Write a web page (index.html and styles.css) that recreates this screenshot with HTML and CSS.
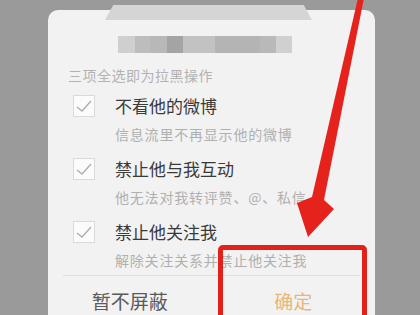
FILE: index.html
```html
<!DOCTYPE html>
<html lang="zh">
<head>
<meta charset="utf-8">
<link rel="stylesheet" href="styles.css">
</head>
<body>
<div class="screen">
  <div class="card">
    <div class="mosaic">
      <span class="m m1"></span><span class="m m2"></span><span class="m m3"></span><span class="m m4"></span><span class="m m5"></span><span class="m m6"></span><span class="m m7"></span><span class="m m8"></span>
    </div>
    <div class="hint">三项全选即为拉黑操作</div>
    <div class="items">
      <div class="item">
        <span class="check"><svg viewBox="0 0 22 22" width="22" height="22"><polyline points="4,12 9,16 18,6" fill="none" stroke="#adadad" stroke-width="1.3"/></svg></span>
        <div class="texts">
          <div class="title">不看他的微博</div>
          <div class="sub">信息流里不再显示他的微博</div>
        </div>
      </div>
      <div class="item">
        <span class="check"><svg viewBox="0 0 22 22" width="22" height="22"><polyline points="4,12 9,16 18,6" fill="none" stroke="#adadad" stroke-width="1.3"/></svg></span>
        <div class="texts">
          <div class="title">禁止他与我互动</div>
          <div class="sub">他无法对我转评赞、@、私信</div>
        </div>
      </div>
      <div class="item">
        <span class="check"><svg viewBox="0 0 22 22" width="22" height="22"><polyline points="4,12 9,16 18,6" fill="none" stroke="#adadad" stroke-width="1.3"/></svg></span>
        <div class="texts">
          <div class="title">禁止他关注我</div>
          <div class="sub">解除关注关系并禁止他关注我</div>
        </div>
      </div>
    </div>
    <div class="divider"></div>
    <div class="buttons">
      <div class="btn cancel">暂不屏蔽</div>
      <div class="btn ok">确定</div>
    </div>
  </div>
  <div class="tab"></div>
  <div class="highlight"></div>
  <svg class="arrow" width="420" height="315" viewBox="0 0 420 315">
    <polygon points="358,-2 364,-2 324,200 334,209 308,237 297,203 312,197" fill="#e5221b"/>
  </svg>
</div>
</body>
</html>
```
FILE: styles.css
```css
html, body {
  margin: 0;
  padding: 0;
}
body {
  background: #9a9a9a;
  font-family: "Noto Sans CJK SC", "Noto Sans", sans-serif;
}
.screen {
  position: relative;
  width: 420px;
  height: 315px;
  overflow: hidden;
}
.card {
  margin: 10px 0 0 48px;
  width: 327px;
  height: 330px;
  background: #f2f2f2;
  border-radius: 10px 10px 0 0;
  padding-top: 26px;
  box-sizing: border-box;
}
.mosaic {
  display: flex;
  margin-left: 70px;
  height: 17px;
}
.m { display: block; height: 17px; }
.m1 { width: 17px; background: #cfcfcf; }
.m2 { width: 15px; background: #bdbdbd; }
.m3 { width: 17px; background: #b8b8b8; }
.m4 { width: 16px; background: #a4a4a4; }
.m5 { width: 32px; background: #c2c2c2; }
.m6 { width: 45px; background: #b4b4b4; }
.m7 { width: 16px; background: #b9b9b9; }
.m8 { width: 16px; background: #d0d0d0; }
.hint {
  margin: 12px 0 0 20px;
  font-size: 14px;
  line-height: 20px;
  letter-spacing: 0.5px;
  color: #b2b2b2;
}
.items {
  display: flex;
  flex-direction: column;
  gap: 14px;
  margin-top: 10px;
  padding-left: 25px;
}
.item {
  display: flex;
  align-items: flex-start;
}
.check {
  display: block;
  width: 22px;
  height: 22px;
  box-sizing: border-box;
  border: 1px solid #dadada;
  background: #fbfbfb;
}
.check svg { display: block; margin: -1px; }
.texts {
  margin-left: 20px;
}
.title {
  font-size: 17px;
  line-height: 22px;
  color: #3a3a3a;
}
.sub {
  margin-top: 7px;
  font-size: 14px;
  line-height: 20px;
  letter-spacing: 0.8px;
  color: #b0b0b0;
}
.divider {
  margin: 5px 15px 0 15px;
  height: 1px;
  background: #dedede;
}
.buttons {
  display: flex;
}
.btn {
  flex: 1;
  text-align: center;
  font-size: 19px;
  line-height: 50px;
}
.cancel { color: #5a5a5a; }
.ok { color: #e8b679; }
.tab {
  position: absolute;
  left: 105px;
  top: 5px;
  width: 207px;
  height: 15px;
  background: #d5d5d5;
  clip-path: polygon(4% 0, 96% 0, 100% 100%, 0 100%);
}
.highlight {
  position: absolute;
  left: 218px;
  top: 245px;
  width: 149px;
  height: 100px;
  box-sizing: border-box;
  border: 5px solid #e3211b;
  border-radius: 5px;
}
.arrow {
  position: absolute;
  left: 0;
  top: 0;
}
```
